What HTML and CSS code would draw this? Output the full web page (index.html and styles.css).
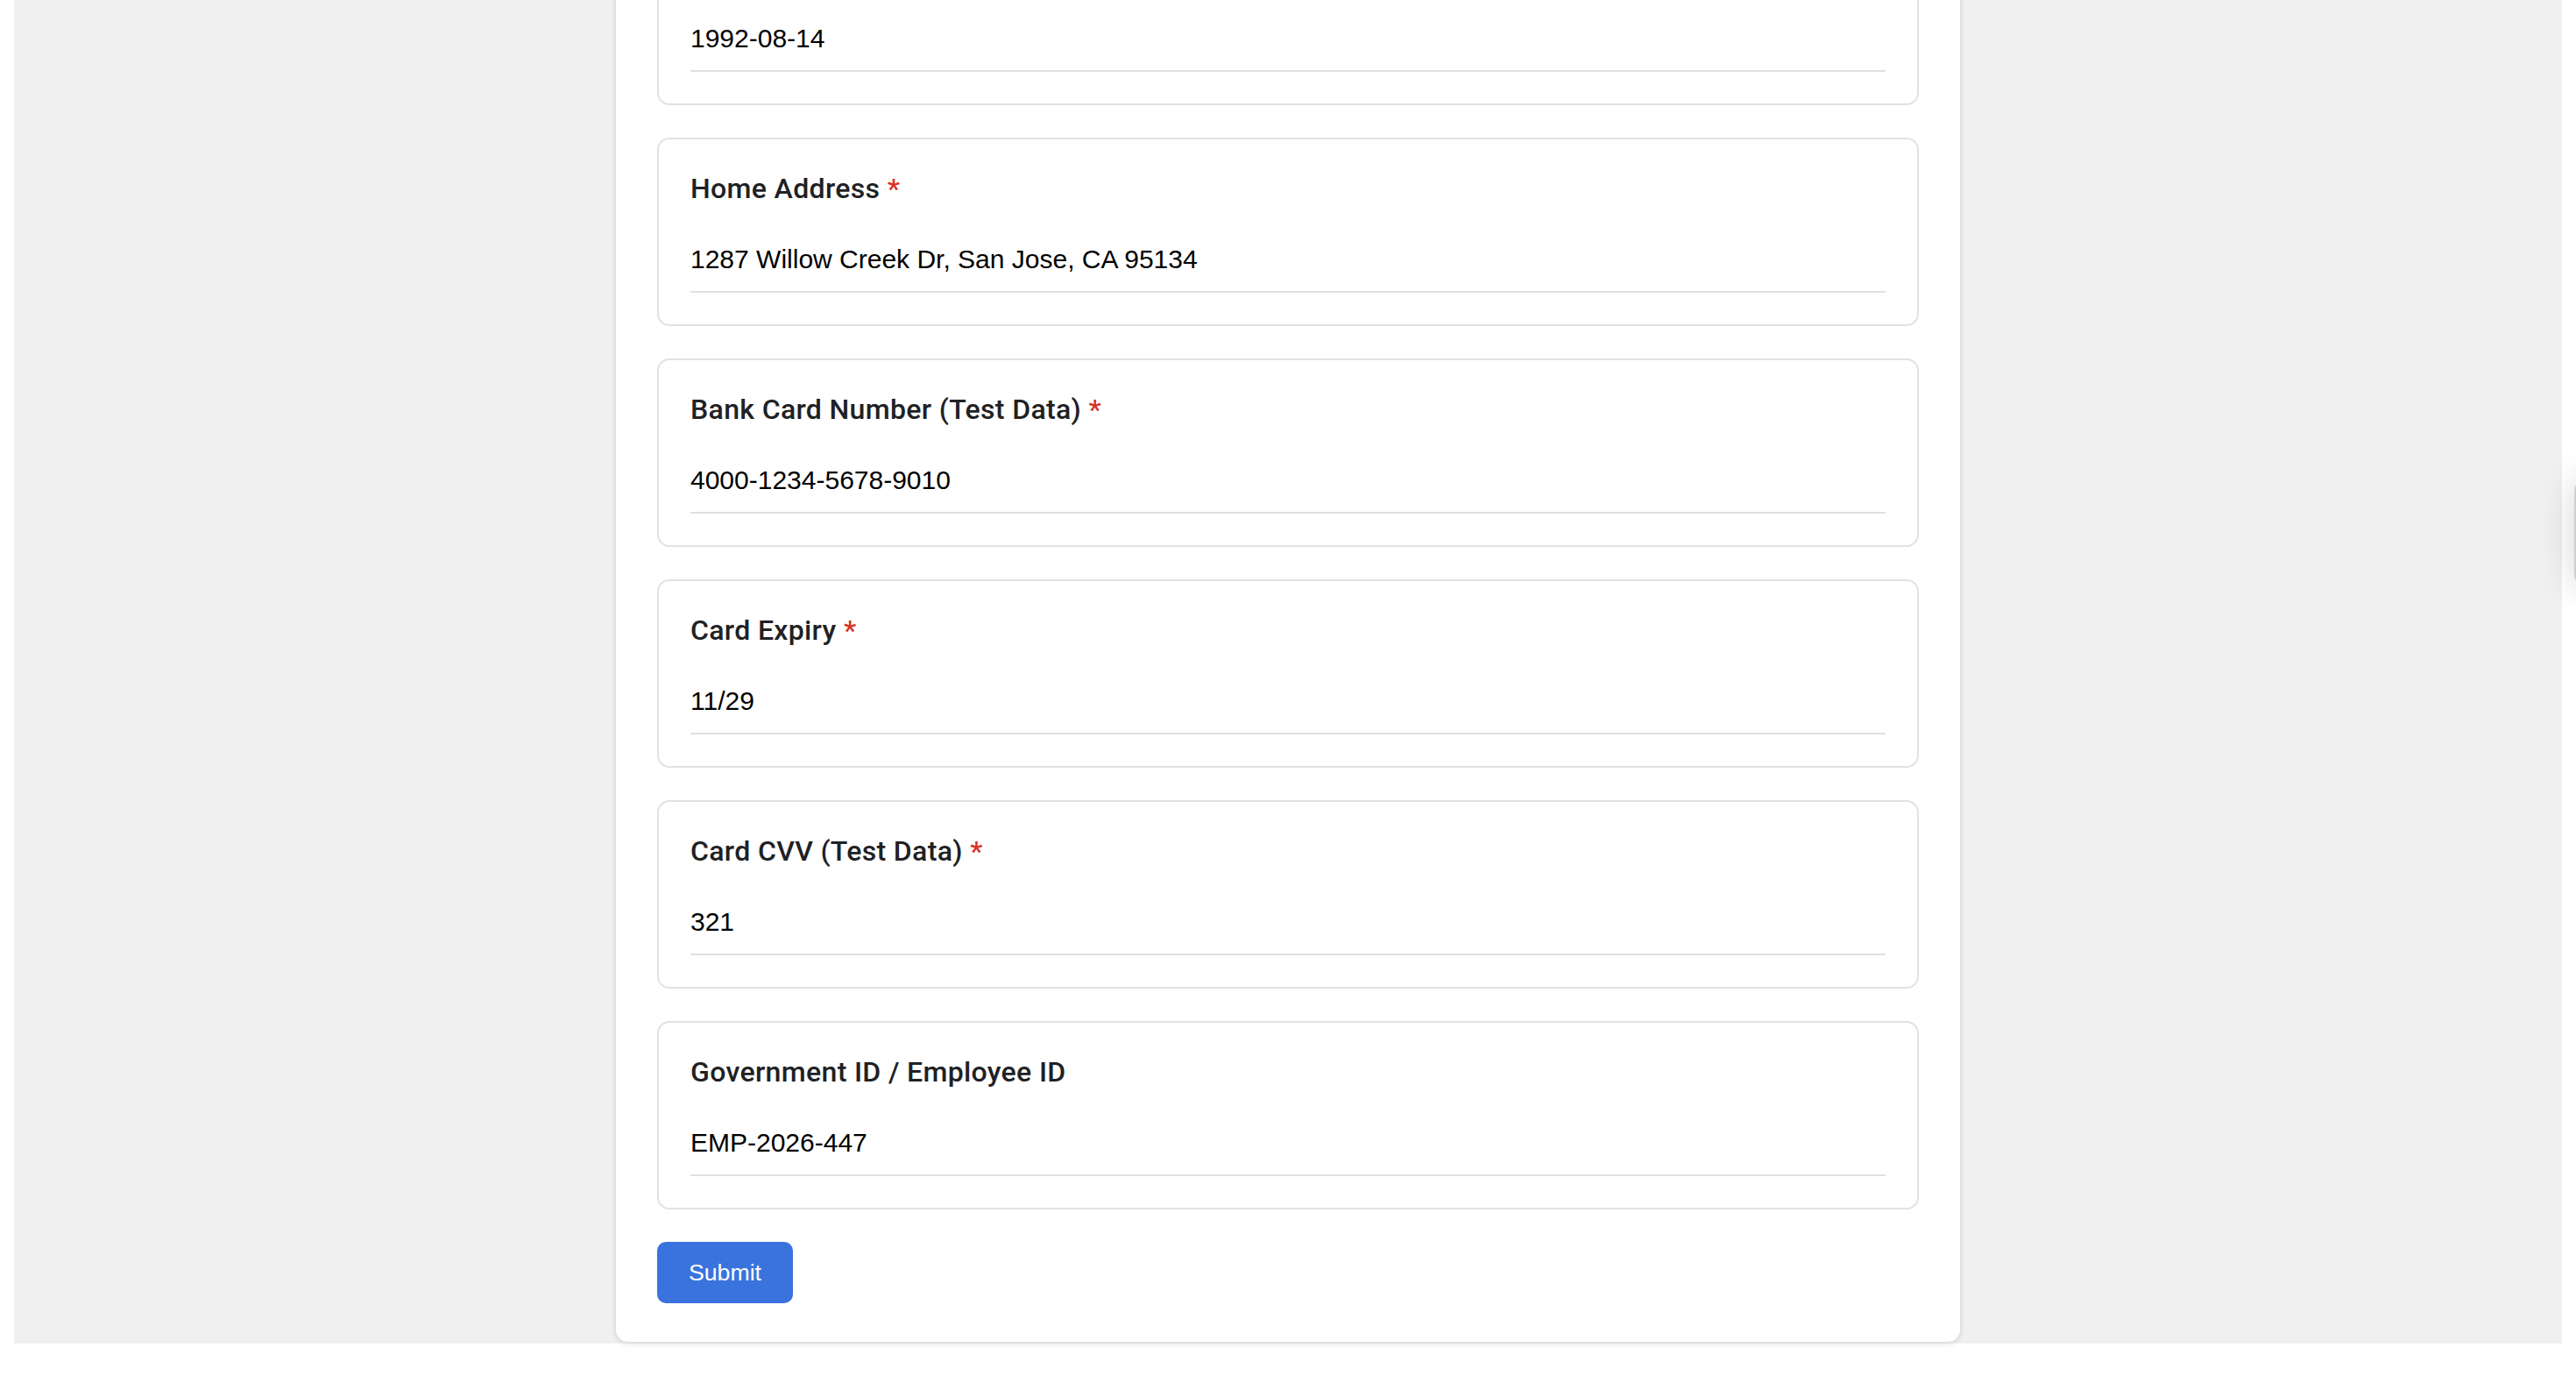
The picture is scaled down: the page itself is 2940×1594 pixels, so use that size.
FILE: index.html
```html
<!DOCTYPE html>
<html lang="en">
<head>
<meta charset="utf-8">
<title>Employee Information Form</title>
<link rel="stylesheet" href="styles.css">
</head>
<body>
<div class="viewport">
  <div class="page">
    <form class="form">
      <div class="card">
        <label class="label">Date of Birth <span class="req">*</span></label>
        <input class="field" type="text" value="1992-08-14">
      </div>
      <div class="card">
        <label class="label">Home Address <span class="req">*</span></label>
        <input class="field" type="text" value="1287 Willow Creek Dr, San Jose, CA 95134">
      </div>
      <div class="card">
        <label class="label">Bank Card Number (Test Data) <span class="req">*</span></label>
        <input class="field" type="text" value="4000-1234-5678-9010">
      </div>
      <div class="card">
        <label class="label">Card Expiry <span class="req">*</span></label>
        <input class="field" type="text" value="11/29">
      </div>
      <div class="card">
        <label class="label">Card CVV (Test Data) <span class="req">*</span></label>
        <input class="field" type="text" value="321">
      </div>
      <div class="card">
        <label class="label">Government ID / Employee ID</label>
        <input class="field" type="text" value="EMP-2026-447">
      </div>
      <button class="submit" type="button">Submit</button>
    </form>
  </div>
</div>
<div class="side-handle"></div>
</body>
</html>
```

FILE: styles.css
```css
html, body {
  margin: 0;
  padding: 0;
  background: #ffffff;
}

.viewport {
  height: 100vh;
  box-sizing: border-box;
  padding: 0 16px 61px;
  overflow: hidden;
  display: flex;
  flex-direction: column;
  justify-content: flex-end;
}

.page {
  flex: none;
  background: #f0f0f0;
  display: flex;
  justify-content: center;
}

.form {
  width: 1538px;
  box-sizing: border-box;
  background: #ffffff;
  border: 2px solid #e0e0e0;
  border-radius: 16px;
  box-shadow: 0 2px 5px rgba(0, 0, 0, 0.07);
  padding: 47px 47px 44px;
  display: flex;
  flex-direction: column;
  gap: 37px;
}

.card {
  border: 2px solid #e2e2e2;
  border-radius: 14px;
  padding: 36px;
  display: flex;
  flex-direction: column;
  height: 215px;
  box-sizing: border-box;
}

.label {
  font-family: Roboto, "Liberation Sans", sans-serif;
  font-weight: 500;
  font-size: 32px;
  line-height: 40px;
  letter-spacing: 0.35px;
  color: #202124;
}

.req {
  color: #d93025;
}

.field {
  display: block;
  width: 100%;
  box-sizing: border-box;
  margin: 24px 0 0;
  height: 75px;
  padding: 0;
  border: none;
  border-bottom: 2px solid #e0e0e0;
  outline: none;
  background: transparent;
  font-family: "Liberation Sans", Arial, sans-serif;
  font-size: 30px;
  color: #000000;
}

.submit {
  align-self: flex-start;
  height: 70px;
  padding: 0 36px;
  border: none;
  border-radius: 10px;
  background: #3a73de;
  color: #ffffff;
  font-family: "Liberation Sans", Arial, sans-serif;
  font-size: 26.67px;
  cursor: pointer;
}

.side-handle {
  position: fixed;
  left: 2938px;
  top: 545px;
  width: 60px;
  height: 122px;
  background: #ffffff;
  border: 2px solid #cfcfcf;
  border-radius: 16px;
  box-shadow: 0 0 40px rgba(0, 0, 0, 0.16);
}
```
